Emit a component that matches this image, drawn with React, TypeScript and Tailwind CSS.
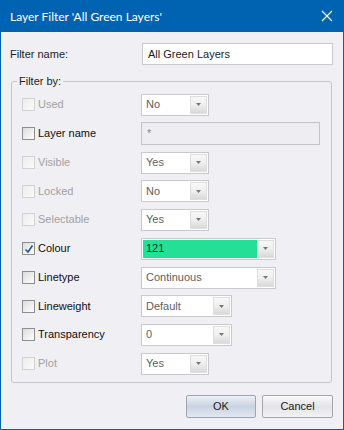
import React from "react";

const F = { fontFamily: '"Liberation Sans", Arial, sans-serif' };

function Caret() {
  return (
    <svg width="5" height="3" viewBox="0 0 5 3">
      <path d="M0 0 L5 0 L2.5 3 Z" fill="#777" />
    </svg>
  );
}

function Combo({
  w,
  value,
  color = "#5e5e5e",
  bg = "bg-white",
}: {
  w: string;
  value: string;
  color?: string;
  bg?: string;
}) {
  return (
    <div className={`${w} h-[22px] flex border border-[#c9c9cc] bg-white p-px`}>
      <div className={`flex-1 flex items-center pl-[3px] text-[11px] ${bg}`} style={{ color }}>
        {value}
      </div>
      <div className="w-[17px] flex items-center justify-center border border-[#dedede] bg-gradient-to-b from-[#f8f8f8] via-[#efefef] to-[#d9d9d9]">
        <Caret />
      </div>
    </div>
  );
}

function Check({ enabled, checked }: { enabled: boolean; checked?: boolean }) {
  return (
    <div
      className={`w-[13px] h-[13px] flex items-center justify-center border ${
        enabled
          ? "border-[#8e8e8e] bg-gradient-to-br from-[#dcdcdc] to-[#ffffff]"
          : "border-[#d2d2d2] bg-gradient-to-br from-[#ececec] to-[#fbfbfb]"
      }`}
    >
      {checked && (
        <svg width="10" height="10" viewBox="0 0 10 10">
          <path d="M1.5 5.5 L4 8 L8.5 1.5" stroke="#2a4f9a" strokeWidth="1.6" fill="none" />
        </svg>
      )}
    </div>
  );
}

type Row = {
  label: string;
  enabled: boolean;
  checked?: boolean;
  h: string;
  control: React.ReactNode;
};

export default function App() {
  const rows: Row[] = [
    { label: "Used", enabled: false, h: "h-[29px]", control: <Combo w="w-[68px]" value="No" /> },
    {
      label: "Layer name",
      enabled: true,
      h: "h-[29px]",
      control: (
        <div className="w-[179px] h-[23px] border border-[#c4c4c8] bg-[#eeeef2] pl-[5px] pt-[2px] text-[11px] text-[#888]">
          *
        </div>
      ),
    },
    { label: "Visible", enabled: false, h: "h-[29px]", control: <Combo w="w-[68px]" value="Yes" /> },
    { label: "Locked", enabled: false, h: "h-[28px]", control: <Combo w="w-[68px]" value="No" /> },
    { label: "Selectable", enabled: false, h: "h-[29px]", control: <Combo w="w-[68px]" value="Yes" /> },
    {
      label: "Colour",
      enabled: true,
      checked: true,
      h: "h-[29px]",
      control: <Combo w="w-[135px]" value="121" color="#0b2a1c" bg="bg-[#25df96]" />,
    },
    { label: "Linetype", enabled: true, h: "h-[29px]", control: <Combo w="w-[135px]" value="Continuous" /> },
    { label: "Lineweight", enabled: true, h: "h-[28px]", control: <Combo w="w-[91px]" value="Default" /> },
    { label: "Transparency", enabled: true, h: "h-[29px]", control: <Combo w="w-[91px]" value="0" /> },
    { label: "Plot", enabled: false, h: "h-[29px]", control: <Combo w="w-[68px]" value="Yes" /> },
  ];

  return (
    <div className="w-[344px] h-[430px] flex flex-col bg-[#0063b1] px-px pb-px" style={F}>
      <div className="h-[32px] shrink-0 flex items-center justify-between pl-[9px] pr-[10px]">
        <span
          className="text-white text-[12px] pt-px"
          style={{ fontFamily: 'Lato, "Noto Sans", sans-serif' }}
        >
          Layer Filter 'All Green Layers'
        </span>
        <svg width="12" height="12" viewBox="0 0 12 12">
          <path d="M1 1 L11 11 M11 1 L1 11" stroke="#fff" strokeWidth="1.1" />
        </svg>
      </div>
      <div className="flex-1 bg-[#efeff4] flex flex-col px-[9px]">
        <div className="mt-[11px] h-[22px] flex items-center">
          <span className="w-[132px] text-[11px] text-[#1e1e1e]">Filter name:</span>
          <div className="w-[191px] h-[22px] border border-[#c9c9cc] bg-white flex items-center pl-[5px] text-[11px] text-[#1a1a1a]">
            All Green Layers
          </div>
        </div>
        <fieldset className="mt-[10px] mx-px border border-[#c6c6ca] rounded-[3px] pl-[10px] pt-[2px] pb-[4px] w-[321px]">
          <legend className="ml-[-5px] px-[2px] text-[11px] text-[#1e1e1e] leading-[13px]">Filter by:</legend>
          <div className="flex flex-col">
            {rows.map((r) => (
              <div key={r.label} className={`${r.h} flex items-center`}>
                <Check enabled={r.enabled} checked={r.checked} />
                <span
                  className={`ml-[3px] w-[103px] text-[11px] ${
                    r.enabled ? "text-[#0f0f0f]" : "text-[#a2a2a2]"
                  }`}
                >
                  {r.label}
                </span>
                {r.control}
              </div>
            ))}
          </div>
        </fieldset>
        <div className="mt-[12px] flex justify-end gap-[6px] pr-[1px]">
          <button className="w-[70px] h-[23px] border border-[#9aa6b6] rounded-[2px] text-[11px] text-[#1a1a1a] bg-gradient-to-b from-[#edf1f7] via-[#c9d3e0] to-[#e3e8f0]">
            OK
          </button>
          <button className="w-[71px] h-[23px] border border-[#a7a7ab] rounded-[2px] text-[11px] text-[#1a1a1a] bg-gradient-to-b from-[#fafafa] via-[#e4e4e8] to-[#f2f2f4]">
            Cancel
          </button>
        </div>
      </div>
    </div>
  );
}
